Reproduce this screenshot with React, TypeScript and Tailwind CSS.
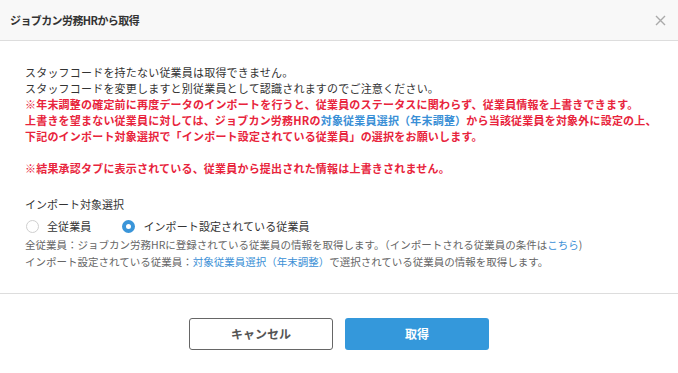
import React, { useState } from "react"

const font = "[font-family:'Noto_Sans_CJK_JP','Noto_Sans',sans-serif]"

const Radio = ({ checked, label, onClick }: { checked: boolean; label: string; onClick: () => void }) => (
  <label className="flex items-center cursor-pointer" onClick={onClick}>
    <span
      className={
        checked
          ? "w-[13px] h-[13px] rounded-full border-[4px] border-[#3a95d9] bg-white"
          : "w-[13px] h-[13px] rounded-full border border-[#cfcfcf] bg-white"
      }
    />
    <span className="ml-[8px] text-[11px] tracking-[0.1px] text-[#333]">{label}</span>
  </label>
)

export default function App() {
  const [target, setTarget] = useState("setting")

  return (
    <div className={`w-[678px] h-[373px] bg-white flex flex-col ${font}`}>
      <header className="h-[41px] flex items-center justify-between bg-[#f8f8f8] border-b border-[#dddddd] pl-[10px] pr-[12px]">
        <h1 className="text-[11px] font-bold text-[#333] tracking-[-0.6px]">ジョブカン労務HRから取得</h1>
        <button className="text-[#aaa]">
          <svg width="11" height="11" viewBox="0 0 11 11" fill="none" stroke="currentColor" strokeWidth="1.4">
            <path d="M1 1L10 10M10 1L1 10" />
          </svg>
        </button>
      </header>

      <div className="flex-1 pl-[25px] pt-[23px] text-[11px] leading-[16px] text-[#333]">
        <div className="tracking-[0.2px]">
          <p>スタッフコードを持たない従業員は取得できません。</p>
          <p>スタッフコードを変更しますと別従業員として認識されますのでご注意ください。</p>
          <div className="text-[#e8243c] font-bold">
            <p>※年末調整の確定前に再度データのインポートを行うと、従業員のステータスに関わらず、従業員情報を上書きできます。</p>
            <p>
              上書きを望まない従業員に対しては、ジョブカン労務HRの
              <a className="text-[#3a8fd6]">対象従業員選択（年末調整）</a>
              から当該従業員を対象外に設定の上、
            </p>
            <p>下記のインポート対象選択で「インポート設定されている従業員」の選択をお願いします。</p>
            <p className="mt-[16px]">※結果承認タブに表示されている、従業員から提出された情報は上書きされません。</p>
          </div>
        </div>

        <p className="mt-[20px]">インポート対象選択</p>
        <div className="flex items-center gap-[31px] mt-[5px] pl-[1px] h-[18px]">
          <Radio checked={target === "all"} label="全従業員" onClick={() => setTarget("all")} />
          <Radio checked={target === "setting"} label="インポート設定されている従業員" onClick={() => setTarget("setting")} />
        </div>
        <div className="mt-[1px] text-[10.5px] leading-[17px] text-[#666]">
          <p>
            全従業員：ジョブカン労務HRに登録されている従業員の情報を取得します。（インポートされる従業員の条件は
            <a className="text-[#3a8fd6]">こちら</a>)
          </p>
          <p>
            インポート設定されている従業員：<a className="text-[#3a8fd6]">対象従業員選択（年末調整）</a>
            で選択されている従業員の情報を取得します。
          </p>
        </div>
      </div>

      <footer className="h-[80px] border-t border-[#dddddd] flex justify-center items-start pt-[24px] gap-[12px]">
        <button className="w-[144px] h-[32px] rounded-[3px] border border-[#666] bg-white text-[12px] font-bold text-[#555]">
          キャンセル
        </button>
        <button className="w-[144px] h-[32px] rounded-[3px] bg-[#3498db] text-[12px] font-bold text-white">
          取得
        </button>
      </footer>
    </div>
  )
}
